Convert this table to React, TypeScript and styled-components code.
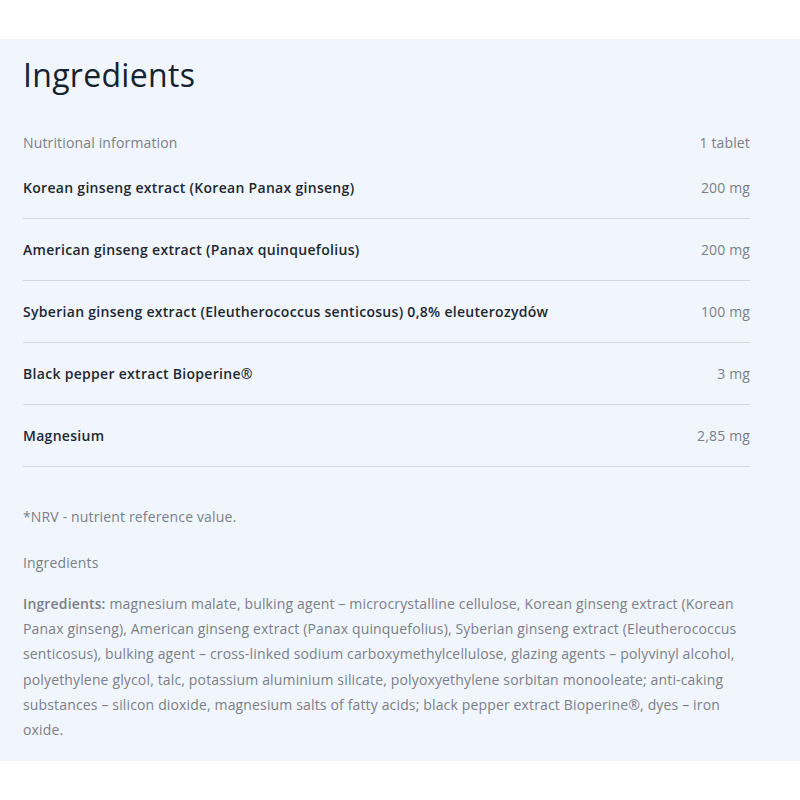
import React from "react";
import styled, { createGlobalStyle } from "styled-components";

const GlobalStyle = createGlobalStyle`
  html, body {
    margin: 0;
    padding: 0;
    background: #ffffff;
  }
  body {
    font-family: "Open Sans", "Lato", sans-serif;
  }
`;

const ROWS = [
  { name: "Korean ginseng extract (Korean Panax ginseng)", amount: "200 mg" },
  { name: "American ginseng extract (Panax quinquefolius)", amount: "200 mg" },
  {
    name: "Syberian ginseng extract (Eleutherococcus senticosus) 0,8% eleuterozydów",
    amount: "100 mg",
  },
  { name: "Black pepper extract Bioperine®", amount: "3 mg" },
  { name: "Magnesium", amount: "2,85 mg" },
];

const Page = styled.div`
  padding-top: 39px;
  height: 800px;
  box-sizing: border-box;
`;

const Panel = styled.section`
  background: #f1f5fd;
  padding: 15px 50px 19px 23px;
  color: #7b7f88;
  letter-spacing: 0.15px;
`;

const Title = styled.h2`
  margin: 0;
  font-size: 32px;
  font-weight: 400;
  line-height: 42px;
  color: #14232f;
  letter-spacing: 0.3px;
`;

const Table = styled.div`
  margin-top: 31px;
  display: flex;
  flex-direction: column;
`;

const Row = styled.div<{ $head?: boolean }>`
  display: flex;
  justify-content: space-between;
  align-items: center;
  height: ${({ $head }) => ($head ? "30px" : "61px")};
  border-bottom: ${({ $head }) => ($head ? "none" : "1px solid #d3d7df")};
  font-size: 14px;
`;

const Name = styled.span<{ $head?: boolean }>`
  color: ${({ $head }) => ($head ? "#7b7f88" : "#1c2832")};
  font-weight: ${({ $head }) => ($head ? 400 : 600)};
  letter-spacing: ${({ $head }) => ($head ? "0.15px" : "0.3px")};
`;

const Amount = styled.span`
  color: #7b7f88;
`;

const Note = styled.p`
  margin: 40px 0 0;
  font-size: 14px;
  line-height: 20px;
`;

const Subhead = styled.p`
  margin: 26px 0 0;
  font-size: 14px;
  line-height: 20px;
`;

const Composition = styled.p`
  margin: 18px 0 0;
  font-size: 14px;
  line-height: 25.2px;

  strong {
    font-weight: 600;
  }
`;

export default function App() {
  return (
    <>
      <GlobalStyle />
      <Page>
        <Panel>
          <Title>Ingredients</Title>
          <Table>
            <Row $head>
              <Name $head>Nutritional information</Name>
              <Amount>1 tablet</Amount>
            </Row>
            {ROWS.map(({ name, amount }) => (
              <Row key={name}>
                <Name>{name}</Name>
                <Amount>{amount}</Amount>
              </Row>
            ))}
          </Table>
          <Note>*NRV - nutrient reference value.</Note>
          <Subhead>Ingredients</Subhead>
          <Composition>
            <strong>Ingredients:</strong> magnesium malate, bulking agent –
            microcrystalline cellulose, Korean ginseng extract (Korean Panax
            ginseng), American ginseng extract (Panax quinquefolius), Syberian
            ginseng extract (Eleutherococcus senticosus), bulking agent –
            cross-linked sodium carboxymethylcellulose, glazing agents –
            polyvinyl alcohol, polyethylene glycol, talc, potassium aluminium
            silicate, polyoxyethylene sorbitan monooleate; anti-caking substances
            – silicon dioxide, magnesium salts of fatty acids; black pepper
            extract Bioperine®, dyes – iron oxide.
          </Composition>
        </Panel>
      </Page>
    </>
  );
}
